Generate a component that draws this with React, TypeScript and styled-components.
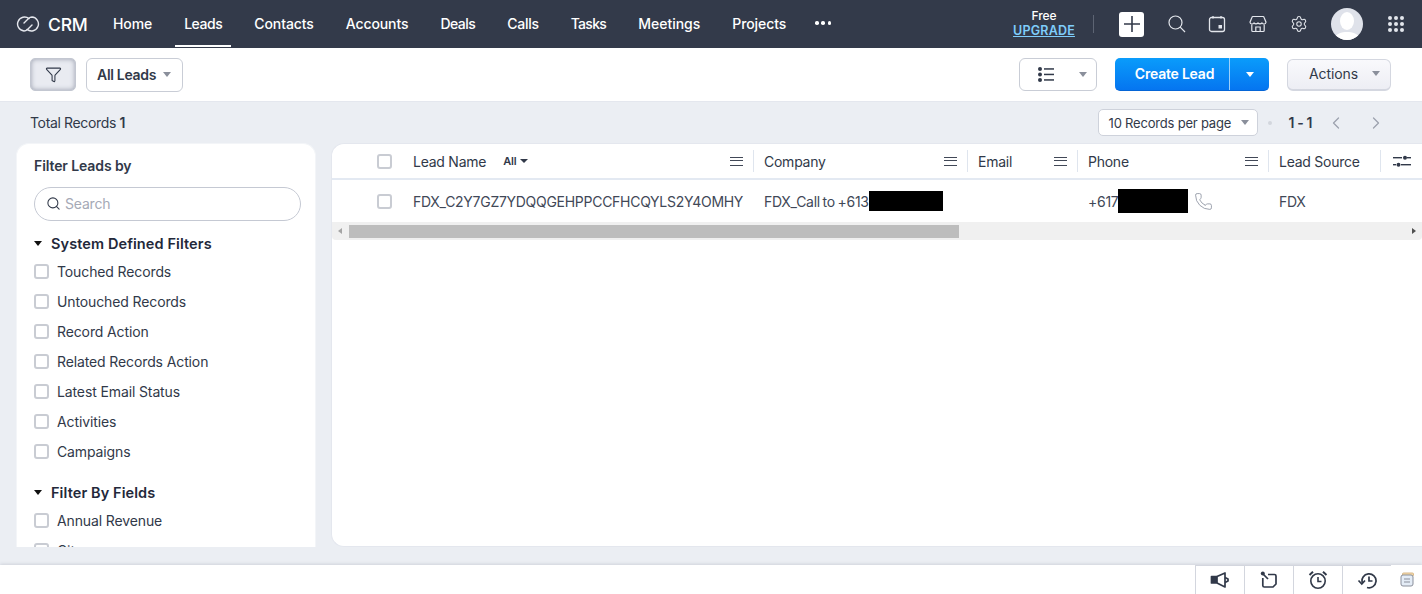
import React from "react";
import styled, { createGlobalStyle } from "styled-components";
import { ChevronLeft, ChevronRight, Settings, Phone, Filter, Search } from "lucide-react";

const FONT = `Inter, "Liberation Sans", sans-serif`;

const GlobalStyle = createGlobalStyle`
  html, body {
    margin: 0;
    padding: 0;
    height: 100%;
    overflow: hidden;
    background: #ebeef3;
    font-family: ${FONT};
    color: #313949;
  }
  * { box-sizing: border-box; }
`;

const Page = styled.div`
  width: 1422px;
  height: 594px;
  display: flex;
  flex-direction: column;
  overflow: hidden;
`;

/* top navigation */
const TopBar = styled.header`
  height: 48px;
  flex: none;
  background: #333a4a;
  display: flex;
  align-items: stretch;
  color: #fff;
`;

const Brand = styled.div`
  display: flex;
  align-items: center;
  gap: 8px;
  padding-left: 16px;
  width: 104px;
  font-size: 17.5px;
  font-weight: 500;
  letter-spacing: -0.2px;
`;

const NavList = styled.nav`
  display: flex;
  align-items: stretch;
  gap: 14px;
`;

const NavItem = styled.a<{ $active?: boolean; $track?: number }>`
  display: flex;
  align-items: center;
  justify-content: center;
  padding: 1px 9px 0;
  font-size: 14px;
  font-weight: 500;
  letter-spacing: ${(p) => p.$track ?? -0.1}px;
  color: #fff;
  border-bottom: 2px solid ${(p) => (p.$active ? "#fff" : "transparent")};
  margin-bottom: 1px;
`;

const MoreItem = styled(NavItem)`
  padding: 1px 6px 0;
`;

const Dots = styled.span`
  display: flex;
  gap: 2.75px;
  & > i {
    width: 3.5px;
    height: 3.5px;
    border-radius: 50%;
    background: #fff;
  }
`;

const TopRight = styled.div`
  margin-left: auto;
  display: flex;
  align-items: center;
`;

const Upgrade = styled.div`
  width: 62px;
  margin-right: 18px;
  padding-bottom: 2px;
  text-align: center;
  font-size: 12px;
  font-weight: 500;
  line-height: 15px;
  letter-spacing: -0.1px;
  & > a {
    display: block;
    color: #7fcdfb;
    font-weight: 600;
    text-decoration: underline;
    font-size: 12.5px;
    letter-spacing: 0.2px;
  }
`;

const Divider = styled.span`
  width: 1px;
  height: 18px;
  background: #5d6473;
  margin-right: 25px;
`;

const PlusButton = styled.span`
  width: 25px;
  height: 25px;
  border-radius: 3px;
  background: #fff;
  display: flex;
  align-items: center;
  justify-content: center;
  margin-right: 24px;
`;

const TopIcon = styled.span<{ $mr: number }>`
  display: flex;
  margin-right: ${(p) => p.$mr}px;
  color: #e3e6ec;
`;

const Avatar = styled.span`
  width: 32px;
  height: 32px;
  border-radius: 50%;
  background: #dfe2ea;
  overflow: hidden;
  margin-right: 25px;
  display: flex;
`;

const AppsGrid = styled.span`
  display: grid;
  grid-template-columns: repeat(3, 4px);
  gap: 2px;
  margin-right: 18px;
  & > i {
    width: 4px;
    height: 4px;
    border-radius: 50%;
    background: #e3e6ec;
  }
`;

/* toolbar */
const ToolBar = styled.div`
  height: 54px;
  flex: none;
  background: #fff;
  border-bottom: 1px solid #e4e7ee;
  display: flex;
  align-items: center;
  padding: 0 31px 0 30px;
`;

const FilterToggle = styled.button`
  width: 46px;
  height: 33px;
  margin-right: 10px;
  border-radius: 5px;
  border: 1px solid #c3c7d1;
  background: #e9ebf1;
  box-shadow: inset 0 0 5px #9a9fae;
  display: flex;
  align-items: center;
  justify-content: center;
  padding: 0;
  color: #313949;
`;

const Select = styled.button`
  height: 34px;
  width: 97px;
  border: 1px solid #c9cdd6;
  border-radius: 6px;
  background: #fff;
  font: 600 14px ${FONT};
  letter-spacing: -0.3px;
  color: #313949;
  display: flex;
  align-items: center;
  gap: 7px;
  padding: 0 0 1px 10px;
`;

const Caret = styled.span<{ $color?: string; $size?: number }>`
  display: inline-block;
  width: 0;
  height: 0;
  border-left: ${(p) => p.$size ?? 4.5}px solid transparent;
  border-right: ${(p) => p.$size ?? 4.5}px solid transparent;
  border-top: ${(p) => (p.$size ?? 4.5) + 0.5}px solid ${(p) => p.$color ?? "#8a8f9b"};
`;

const ViewSwitch = styled.button`
  margin-left: auto;
  width: 78px;
  height: 33px;
  border: 1px solid #c9cdd6;
  border-radius: 6px;
  background: #fff;
  display: flex;
  align-items: center;
  justify-content: space-between;
  padding: 0 9px 0 18px;
  margin-right: 18px;
`;

const CreateGroup = styled.div`
  width: 154px;
  height: 33px;
  border-radius: 5px;
  background: linear-gradient(#0a9cfb, #0575f0);
  border-bottom: 1px solid #0565d6;
  display: flex;
  color: #fff;
  margin-right: 18px;
`;

const CreateMain = styled.span`
  flex: 1;
  display: flex;
  align-items: center;
  justify-content: center;
  padding: 0 0 2px 5px;
  font-size: 14px;
  font-weight: 600;
  letter-spacing: -0.22px;
  border-right: 1px solid #9dd0fb;
`;

const CreateCaret = styled.span`
  width: 39px;
  display: flex;
  align-items: center;
  justify-content: center;
`;

const ActionsButton = styled.button`
  width: 104px;
  height: 32px;
  border: 1px solid #d4d7e0;
  border-bottom-width: 2px;
  border-radius: 6px;
  background: linear-gradient(#f9f9fc, #edeef4);
  font: 400 14px ${FONT};
  letter-spacing: -0.1px;
  color: #313949;
  display: flex;
  align-items: center;
  justify-content: space-between;
  padding: 0 10px 1px 21px;
`;

/* records row */
const RecordsRow = styled.div`
  height: 41px;
  flex: none;
  display: flex;
  align-items: center;
  padding: 0 36px 0 30px;
  font-size: 14px;
  letter-spacing: -0.35px;
  color: #313949;
  & b {
    font-weight: 600;
  }
`;

const PerPage = styled.button`
  margin-left: auto;
  width: 160px;
  height: 27px;
  border: 1px solid #ced2db;
  border-radius: 5px;
  background: #fff;
  font: 400 13px ${FONT};
  letter-spacing: -0.2px;
  color: #313949;
  display: flex;
  align-items: center;
  justify-content: space-between;
  padding: 0 8px 0 10px;
`;

const Bullet = styled.span`
  width: 4px;
  height: 4px;
  border-radius: 50%;
  background: #d3d6dd;
  margin: 0 17px 0 10px;
`;

const PageCount = styled.span`
  font-size: 14px;
  font-weight: 600;
  letter-spacing: -0.4px;
  margin-right: 14px;
`;

const PagerArrows = styled.span`
  display: flex;
  gap: 20px;
  color: #9ca1ad;
`;

/* main area */
const Main = styled.main`
  height: 404px;
  flex: none;
  display: flex;
  gap: 15px;
  padding-left: 16px;
`;

const Sidebar = styled.aside`
  width: 300px;
  background: #fff;
  border-radius: 13px 13px 0 0;
  border: 1px solid #f3f5f8;
  border-bottom: none;
  padding: 13px 14px 0 17px;
  overflow: hidden;
`;

const SideTitle = styled.h2`
  margin: 0 0 12px;
  font-size: 14px;
  line-height: 18px;
  font-weight: 600;
  letter-spacing: -0.1px;
`;

const SearchBox = styled.div`
  height: 34px;
  width: 267px;
  border: 1px solid #c5c9d3;
  border-radius: 17px;
  display: flex;
  align-items: center;
  gap: 4px;
  padding: 0 0 2px 11px;
  font-size: 14px;
  letter-spacing: -0.2px;
  color: #a5a9b6;
  margin-bottom: 11px;
`;

const GroupHead = styled.div<{ $top?: number }>`
  display: flex;
  align-items: center;
  gap: 9px;
  margin-top: ${(p) => p.$top ?? 0}px;
  height: 22px;
  font-size: 14.5px;
  font-weight: 600;
  letter-spacing: 0.1px;
  color: #23283a;
`;

const FilterList = styled.div`
  margin-top: 2px;
`;

const FilterRow = styled.label`
  height: 30px;
  display: flex;
  align-items: center;
  gap: 8px;
  font-size: 14px;
  letter-spacing: -0.12px;
  color: #313949;
`;

const Check = styled.span`
  display: inline-block;
  width: 15px;
  height: 15px;
  flex: none;
  border: 2px solid #c9ccd3;
  border-radius: 3px;
  background: #fff;
`;

const TablePanel = styled.section`
  flex: 1;
  background: #fff;
  border: 1px solid #e4e7ee;
  border-right: none;
  border-radius: 13px 0 0 13px;
  overflow: hidden;
`;

const COLUMNS = "71px 351px 214px 110px 191px 112px 1fr";

const HeaderRow = styled.div`
  height: 36px;
  display: grid;
  grid-template-columns: ${COLUMNS};
  border-bottom: 2px solid #e3e9f2;
  font-size: 14px;
  letter-spacing: -0.25px;
  color: #313949;
`;

const BodyRow = styled.div`
  height: 42px;
  display: grid;
  grid-template-columns: ${COLUMNS};
  font-size: 14px;
  letter-spacing: -0.28px;
  word-spacing: -1px;
  color: #414857;
`;

const CheckCell = styled.div`
  display: flex;
  align-items: center;
  justify-content: flex-end;
  padding-right: 11px;
`;

const HeadCell = styled.div<{ $last?: boolean }>`
  position: relative;
  display: flex;
  align-items: center;
  padding: 0 10px 0 ${(p) => (p.$last ? 12 : 10)}px;
  gap: 17px;
  &::after {
    content: "";
    position: absolute;
    right: 0;
    top: 6px;
    bottom: 6px;
    width: 1px;
    background: ${(p) => (p.$last ? "transparent" : "#dfe5ee")};
  }
`;

const AllFilter = styled.span`
  display: flex;
  align-items: center;
  gap: 4px;
  font-size: 11px;
  font-weight: 600;
  letter-spacing: -0.2px;
`;

const MenuIcon = styled.span`
  margin-left: auto;
  width: 13px;
  height: 9px;
  margin-right: 1px;
  border-top: 1.5px solid #414857;
  border-bottom: 1.5px solid #414857;
  position: relative;
  &::after {
    content: "";
    position: absolute;
    left: 0;
    right: 0;
    top: 2.25px;
    height: 1.5px;
    background: #414857;
  }
`;

const BodyCell = styled.div`
  display: flex;
  align-items: center;
  padding: 0 10px;
  white-space: nowrap;
  overflow: hidden;
`;

const Redacted = styled.span<{ $w: number; $h: number }>`
  display: inline-block;
  width: ${(p) => p.$w}px;
  height: ${(p) => p.$h}px;
  background: #000;
  flex: none;
`;

const CallIcon = styled(Phone)`
  margin-left: 6px;
  flex: none;
`;

const ScrollBar = styled.div`
  height: 18px;
  background: #f0f0f0;
  display: flex;
  align-items: center;
  border-radius: 0 0 4px 4px;
`;

const ScrollArrow = styled.span<{ $dir: "left" | "right" }>`
  width: 0;
  height: 0;
  border-top: 3.5px solid transparent;
  border-bottom: 3.5px solid transparent;
  ${(p) => (p.$dir === "left" ? "border-right: 4px solid #a4a4a4;" : "border-left: 4px solid #505050;")}
  ${(p) => (p.$dir === "left" ? "margin: 0 7px 0 6px;" : "margin: 0 6px 0 auto;")}
`;

const ScrollThumb = styled.span`
  width: 610px;
  height: 13px;
  background: #bdbdbd;
`;

/* footer */
const Footer = styled.footer`
  margin-top: 18px;
  flex: 1;
  background: #fff;
  box-shadow: 0 -1px 3px #cfd3db;
  display: flex;
  justify-content: flex-end;
  padding-right: 31px;
  position: relative;
`;

const FooterTab = styled.span`
  width: 49px;
  border-left: 1px solid #d3d6de;
  border-top: 1px solid #d3d6de;
  display: flex;
  align-items: center;
  justify-content: center;
  &:last-of-type {
    border-right: 1px solid #d3d6de;
  }
`;

const NotesBadge = styled.span`
  position: absolute;
  right: 7px;
  top: 7px;
  display: flex;
`;

const NAV = [
  { label: "Home" },
  { label: "Leads", active: true, track: -0.45 },
  { label: "Contacts" },
  { label: "Accounts" },
  { label: "Deals", track: -0.5 },
  { label: "Calls", track: -0.3 },
  { label: "Tasks", track: -0.7 },
  { label: "Meetings", track: 0 },
  { label: "Projects" },
];

const SYSTEM_FILTERS = [
  "Touched Records",
  "Untouched Records",
  "Record Action",
  "Related Records Action",
  "Latest Email Status",
  "Activities",
  "Campaigns",
];

const Logo = () => (
  <svg width="24" height="18" viewBox="0 0 24 18" fill="none" stroke="#e6e8ee" strokeWidth="1.4" strokeLinecap="round">
    <path d="M13 3.6A7 7 0 1 0 8 16c1.5 0 2.5-.6 3.5-1.5L16 10" />
    <path d="M11 14.4A7 7 0 1 0 16 2c-1.5 0-2.5.6-3.5 1.5L8 8" />
  </svg>
);

const ListIcon = () => (
  <svg width="16" height="15" viewBox="0 0 16 15" fill="#313949">
    <circle cx="2" cy="2" r="2" />
    <circle cx="2" cy="7.5" r="2" />
    <circle cx="2" cy="13" r="2" />
    <rect x="6" y="1.2" width="10" height="1.5" />
    <rect x="6" y="6.7" width="10" height="1.5" />
    <rect x="6" y="12.2" width="10" height="1.5" />
  </svg>
);

const ColumnSettings = () => (
  <svg width="18" height="14" viewBox="0 0 18 14" fill="#313949">
    <rect x="0" y="3" width="9" height="1.4" />
    <rect x="14" y="3" width="4" height="1.4" />
    <circle cx="12" cy="3.7" r="2" />
    <rect x="0" y="10" width="3" height="1.4" />
    <rect x="8" y="10" width="10" height="1.4" />
    <circle cx="5.5" cy="10.7" r="2" />
  </svg>
);

const SearchIcon = () => (
  <svg width="18" height="18" viewBox="0 0 18 18" fill="none" stroke="#e3e6ec" strokeWidth="1.2">
    <circle cx="7.5" cy="7.5" r="6.5" />
    <path d="M12.2 12.2L17 17" />
  </svg>
);

const CalendarIcon = () => (
  <svg width="18" height="18" viewBox="0 0 18 18" fill="none" stroke="#e3e6ec" strokeWidth="1.3">
    <rect x="1.5" y="2.5" width="15" height="14" rx="2" />
    <path d="M5 1v2.5M13 1v2.5" />
    <rect x="10.5" y="10" width="3.5" height="3.5" fill="#e3e6ec" stroke="none" />
  </svg>
);

const StoreIcon = () => (
  <svg width="18" height="18" viewBox="0 0 18 18" fill="none" stroke="#e3e6ec" strokeWidth="1.2">
    <path d="M4 1.5h10a1 1 0 0 1 1 .7l2 5a2 2 0 0 1-2 1.8 2.5 2.5 0 0 1-2-1 2.8 2.8 0 0 1-4 0 2.8 2.8 0 0 1-4 0 2.5 2.5 0 0 1-2 1 2 2 0 0 1-2-1.8l2-5a1 1 0 0 1 1-.7z" />
    <path d="M2.8 9.5v6a1 1 0 0 0 1 1h10.4a1 1 0 0 0 1-1v-6" />
    <path d="M6.8 16.5v-4.5h4.4v4.5" />
  </svg>
);

const MegaphoneIcon = () => (
  <svg width="20" height="18" viewBox="0 0 20 18" fill="none" stroke="#313949" strokeWidth="1.7" strokeLinejoin="round">
    <path d="M1.5 5.5H7v6.5H1.5z" fill="#313949" />
    <path d="M7 5.5L15 2v14l-8-4" />
    <path d="M15 6.5l3 1.5v2l-3 1.5" />
  </svg>
);

const NoteIcon = () => (
  <svg width="18" height="18" viewBox="0 0 18 18" fill="none" stroke="#313949" strokeWidth="1.7">
    <circle cx="2.8" cy="2.5" r="2" fill="#313949" stroke="none" />
    <path d="M2.8 7v7.5A1.5 1.5 0 0 0 4.300 16H13l3-3V5a1.500 1.500 0 0 0-1.500-1.500H8" />
    <path d="M3 3l5 5" />
  </svg>
);

const AlarmIcon = () => (
  <svg width="20" height="20" viewBox="0 0 20 20" fill="none" stroke="#313949" strokeWidth="1.6">
    <circle cx="10" cy="11" r="7.2" />
    <path d="M10 7v4.500h3.500" />
    <path d="M1.500 5L5 1.800M18.500 5L15 1.800" strokeWidth="2" />
  </svg>
);

const HistoryIcon = () => (
  <svg width="20" height="18" viewBox="0 0 20 18" fill="none" stroke="#313949" strokeWidth="1.7">
    <path d="M5.400 12A7 7 0 1 1 10 16.500" />
    <path d="M1.500 9.500L4.800 13l3.200-3.500" />
    <path d="M12 5.500v4.500h3.500" />
  </svg>
);

const NotesIcon = () => (
  <svg width="15" height="15" viewBox="0 0 15 15" fill="none" stroke="#8a8f9b" strokeWidth="1">
    <rect x="2.500" y="1" width="11" height="3" rx="1" fill="#f4d9a8" stroke="#d9b98a" />
    <rect x="1" y="3" width="12" height="11" rx="2" fill="#e4ecf6" />
    <path d="M4 7h6M4 10h6" />
  </svg>
);

const App = () => {
  return (
    <Page>
      <GlobalStyle />
      <TopBar>
        <Brand>
          <Logo />
          CRM
        </Brand>
        <NavList>
          {NAV.map((n) => (
            <NavItem key={n.label} $active={n.active} $track={n.track}>
              {n.label}
            </NavItem>
          ))}
          <MoreItem>
            <Dots>
              <i />
              <i />
              <i />
            </Dots>
          </MoreItem>
        </NavList>
        <TopRight>
          <Upgrade>
            Free
            <a>UPGRADE</a>
          </Upgrade>
          <Divider />
          <PlusButton>
            <svg width="18" height="18" viewBox="0 0 18 18" stroke="#333a4a" strokeWidth="1.6">
              <path d="M9 1v16M1 9h16" />
            </svg>
          </PlusButton>
          <TopIcon $mr={22}>
            <SearchIcon />
          </TopIcon>
          <TopIcon $mr={23}>
            <CalendarIcon />
          </TopIcon>
          <TopIcon $mr={23}>
            <StoreIcon />
          </TopIcon>
          <TopIcon $mr={23}>
            <Settings size={18} strokeWidth={1.4} />
          </TopIcon>
          <Avatar>
            <svg width="32" height="32" viewBox="0 0 32 32">
              <ellipse cx="16" cy="13" rx="7" ry="9" fill="#fff" />
              <path d="M3 32c1-7 8-8 13-8s12 1 13 8z" fill="#fff" />
            </svg>
          </Avatar>
          <AppsGrid>
            {Array.from({ length: 9 }).map((_, i) => (
              <i key={i} />
            ))}
          </AppsGrid>
        </TopRight>
      </TopBar>

      <ToolBar>
        <FilterToggle>
          <Filter size={17} strokeWidth={1.5} />
        </FilterToggle>
        <Select>
          All Leads <Caret />
        </Select>
        <ViewSwitch>
          <ListIcon />
          <Caret />
        </ViewSwitch>
        <CreateGroup>
          <CreateMain>Create Lead</CreateMain>
          <CreateCaret>
            <Caret $color="#fff" />
          </CreateCaret>
        </CreateGroup>
        <ActionsButton>
          Actions <Caret />
        </ActionsButton>
      </ToolBar>

      <RecordsRow>
        <span>
          Total Records <b>1</b>
        </span>
        <PerPage>
          10 Records per page <Caret />
        </PerPage>
        <Bullet />
        <PageCount>1 - 1</PageCount>
        <PagerArrows>
          <ChevronLeft size={20} strokeWidth={1.5} />
          <ChevronRight size={20} strokeWidth={1.5} />
        </PagerArrows>
      </RecordsRow>

      <Main>
        <Sidebar>
          <SideTitle>Filter Leads by</SideTitle>
          <SearchBox>
            <Search size={15} strokeWidth={1.7} color="#313949" />
            Search
          </SearchBox>
          <GroupHead>
            <Caret $color="#111" />
            System Defined Filters
          </GroupHead>
          <FilterList>
            {SYSTEM_FILTERS.map((f) => (
              <FilterRow key={f}>
                <Check />
                {f}
              </FilterRow>
            ))}
          </FilterList>
          <GroupHead $top={15}>
            <Caret $color="#111" />
            Filter By Fields
          </GroupHead>
          <FilterList>
            <FilterRow>
              <Check />
              Annual Revenue
            </FilterRow>
            <FilterRow>
              <Check />
              City
            </FilterRow>
          </FilterList>
        </Sidebar>

        <TablePanel>
          <HeaderRow>
            <CheckCell>
              <Check />
            </CheckCell>
            <HeadCell>
              Lead Name
              <AllFilter>
                All <Caret $color="#313949" $size={4} />
              </AllFilter>
              <MenuIcon />
            </HeadCell>
            <HeadCell>
              Company
              <MenuIcon />
            </HeadCell>
            <HeadCell>
              Email
              <MenuIcon />
            </HeadCell>
            <HeadCell>
              Phone
              <MenuIcon />
            </HeadCell>
            <HeadCell>Lead Source</HeadCell>
            <HeadCell $last>
              <ColumnSettings />
            </HeadCell>
          </HeaderRow>
          <BodyRow>
            <CheckCell>
              <Check />
            </CheckCell>
            <BodyCell>FDX_C2Y7GZ7YDQQGEHPPCCFHCQYLS2Y4OMHY</BodyCell>
            <BodyCell>
              FDX_Call to +613
              <Redacted $w={74} $h={20} />
            </BodyCell>
            <BodyCell />
            <BodyCell>
              +617
              <Redacted $w={70} $h={24} />
              <CallIcon size={19} strokeWidth={1.1} color="#8f95a3" />
            </BodyCell>
            <BodyCell>FDX</BodyCell>
            <BodyCell />
          </BodyRow>
          <ScrollBar>
            <ScrollArrow $dir="left" />
            <ScrollThumb />
            <ScrollArrow $dir="right" />
          </ScrollBar>
        </TablePanel>
      </Main>

      <Footer>
        <FooterTab>
          <MegaphoneIcon />
        </FooterTab>
        <FooterTab>
          <NoteIcon />
        </FooterTab>
        <FooterTab>
          <AlarmIcon />
        </FooterTab>
        <FooterTab>
          <HistoryIcon />
        </FooterTab>
        <NotesBadge>
          <NotesIcon />
        </NotesBadge>
      </Footer>
    </Page>
  );
};

export default App;
